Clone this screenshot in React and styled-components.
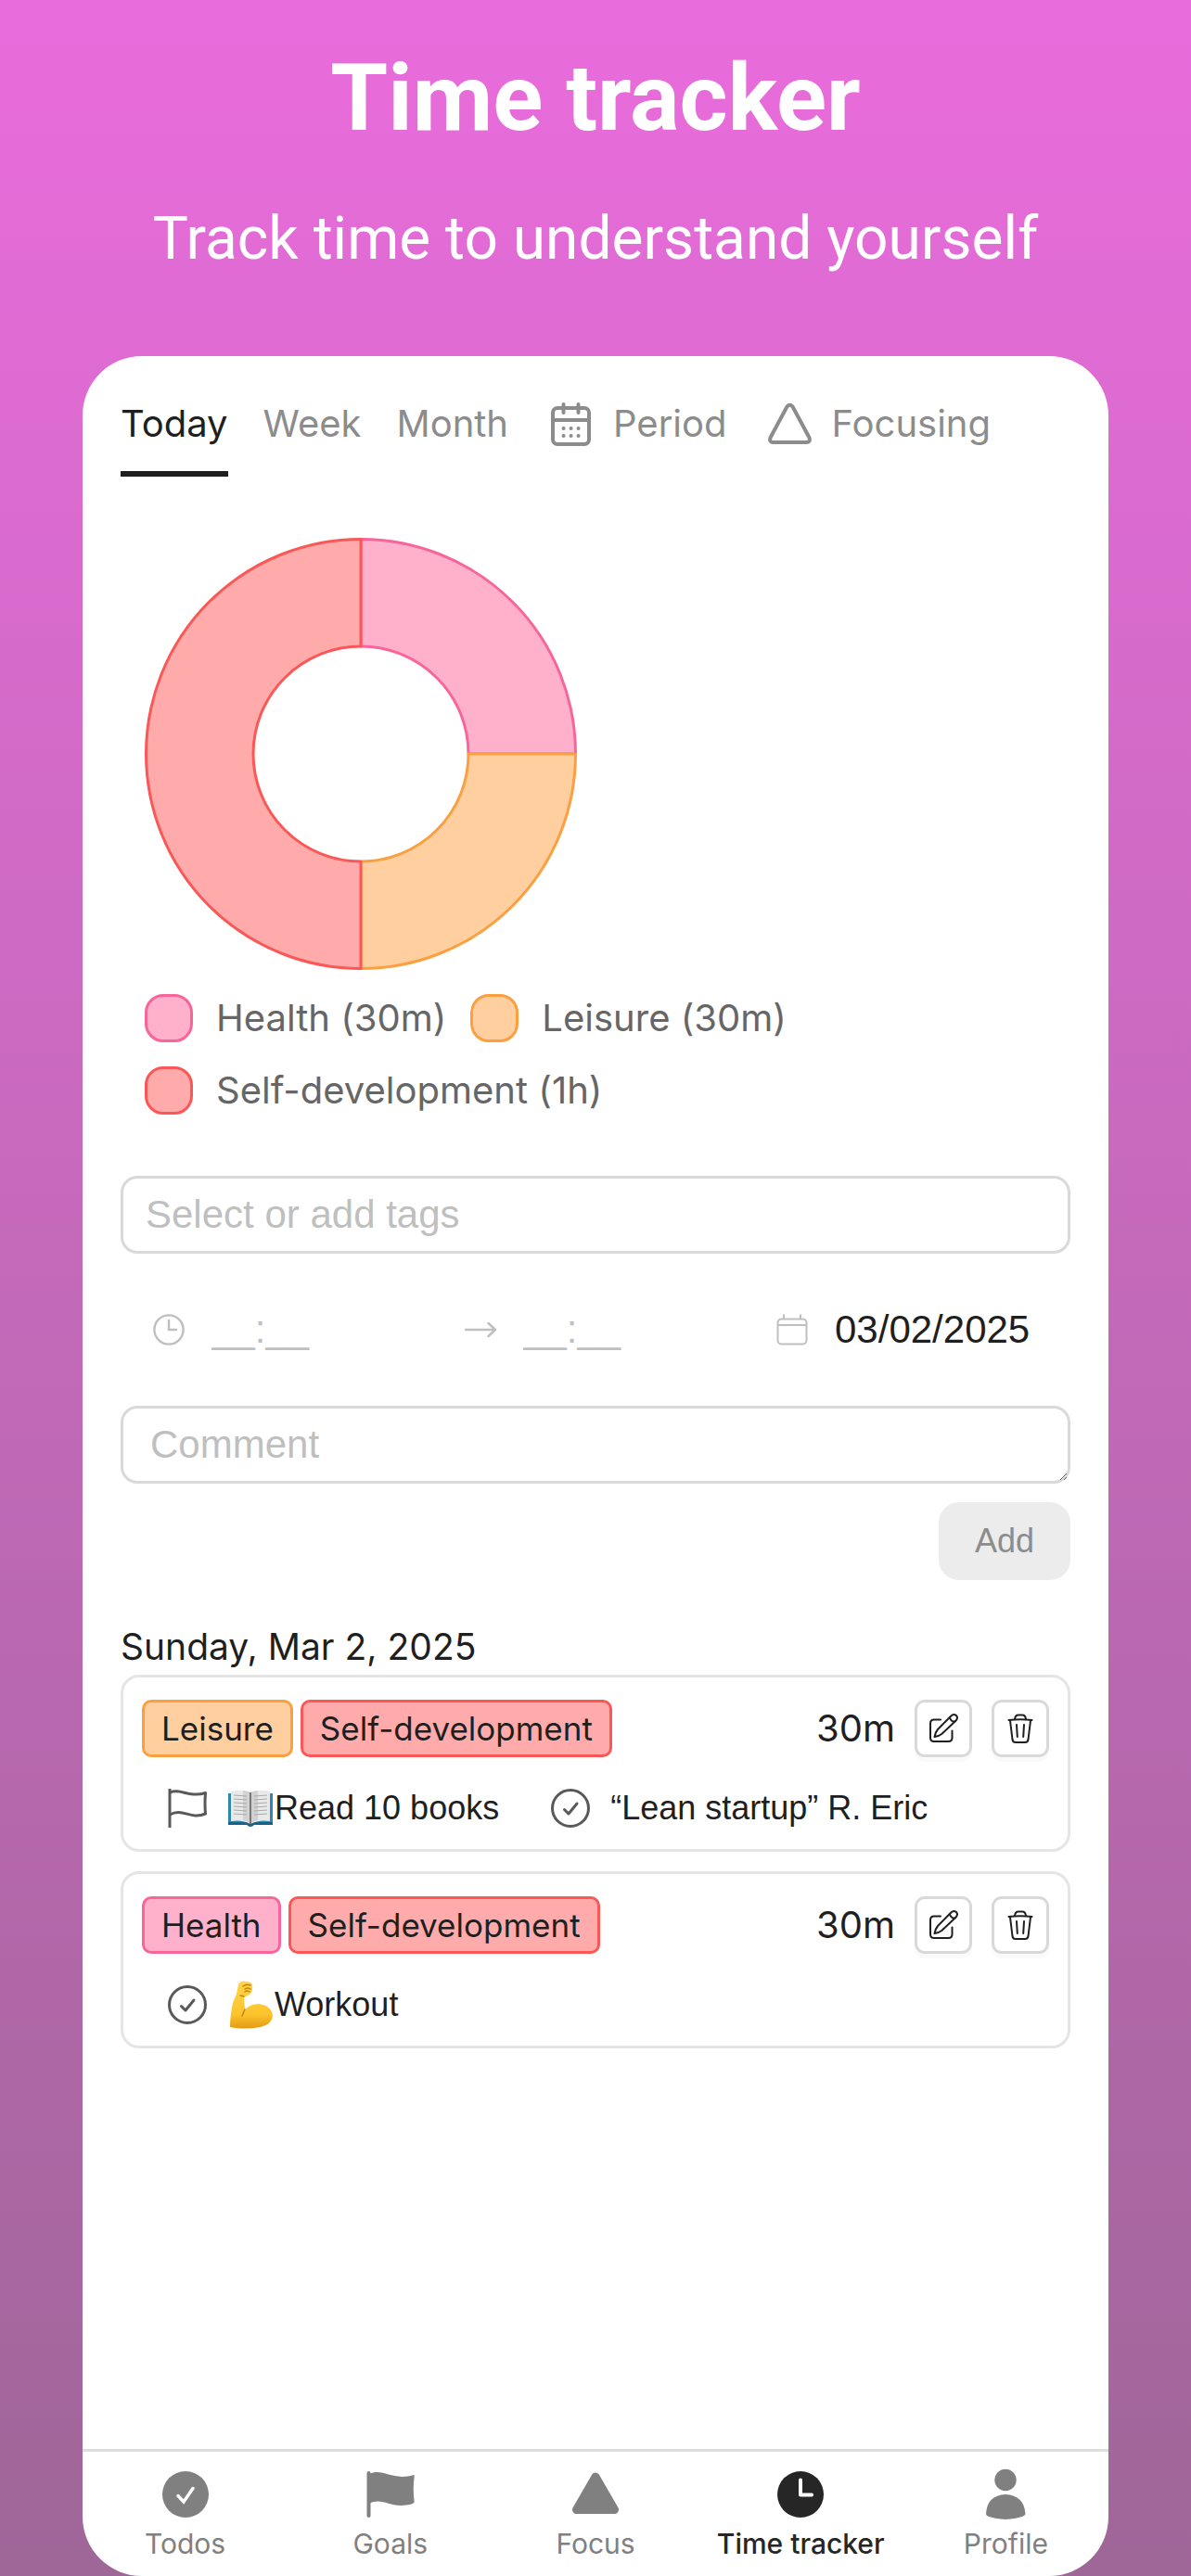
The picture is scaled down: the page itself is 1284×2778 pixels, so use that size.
import { useState } from "react";
import styled, { createGlobalStyle } from "styled-components";

const GlobalStyle = createGlobalStyle`
  *,
  *::before,
  *::after {
    box-sizing: border-box;
  }
  body {
    margin: 0;
    color: #1f1f1f;
    font-family: Inter, "Liberation Sans", sans-serif;
  }
  button,
  input,
  textarea {
    font-family: "Liberation Sans", Arial, sans-serif;
    color: inherit;
  }
`;

//Styling
const Page = styled.div`
  min-height: 100vh;
  display: flex;
  flex-direction: column;
  padding: 0 89px;
  background: linear-gradient(#e96cdc, #9f6698);
`;

const Header = styled.header`
  padding: 46px 0 88px;
  display: flex;
  flex-direction: column;
  gap: 54px;
  text-align: center;
  white-space: nowrap;
  color: #fff;
  font-family: Roboto, sans-serif;
`;

const Title = styled.h1`
  margin: 0;
  font-size: 100px;
  line-height: 120px;
  font-weight: 700;
`;

const Subtitle = styled.p`
  margin: 0;
  font-size: 64px;
  line-height: 76px;
`;

const Screen = styled.div`
  flex: 1;
  display: flex;
  flex-direction: column;
  background: #fff;
  border-radius: 64px;
  overflow: hidden;
`;

const Content = styled.main`
  flex: 1;
  padding: 0 41px;
`;

const Tabs = styled.div`
  display: flex;
  gap: 38px;
`;

const TabItem = styled.div`
  border-bottom: 6px solid
    ${(props) => (props.$active ? "#1f1f1f" : "transparent")};
  border-radius: 4px 4px 0 0;
`;

const Tab = styled.button`
  display: flex;
  align-items: center;
  gap: 21px;
  padding: 40px 0 18px;
  border: none;
  background: none;
  font-family: Inter, sans-serif;
  font-size: 40px;
  line-height: 66px;
  color: ${(props) => (props.$active ? "#1f1f1f" : "#8c8c8c")};

  svg {
    margin-left: 6px;
  }
`;

const ChartSection = styled.section`
  padding: 66px 26px 0;
`;

const Donut = styled.svg`
  display: block;
  width: 466px;
  height: 466px;
`;

const Legend = styled.ul`
  margin: 26px 0 0;
  padding: 0;
  list-style: none;
  display: flex;
  flex-wrap: wrap;
  gap: 26px;
  color: #666;
  font-size: 40px;
  line-height: 52px;
`;

const LegendItem = styled.li`
  display: flex;
  gap: 25px;
`;

const Swatch = styled.span`
  width: 52px;
  height: 52px;
  border: 3px solid ${(props) => props.$line};
  border-radius: 20px;
  background: ${(props) => props.$fill};
`;

const Form = styled.form`
  margin-top: 66px;
`;

const TagInput = styled.input`
  display: block;
  width: 100%;
  height: 84px;
  padding: 6px 24px;
  border: 3px solid #d9d9d9;
  border-radius: 18px;
  font-size: 42px;
  line-height: 66px;

  &::placeholder {
    color: #bfbfbf;
  }
`;

const TimeRow = styled.div`
  display: grid;
  grid-template-columns: repeat(3, 1fr);
  padding: 49px 16px 49px 0;
`;

const TimeField = styled.label`
  display: flex;
  align-items: center;
  gap: 29px;
  padding-left: 35px;
  color: #bfbfbf;

  svg {
    flex: none;
  }
`;

const TimeInput = styled.input`
  width: 100%;
  min-width: 0;
  height: 66px;
  padding: 0;
  border: none;
  background: none;
  font-size: 42px;
  line-height: 66px;
  color: #1f1f1f;

  &::placeholder {
    color: #bfbfbf;
  }
`;

const Comment = styled.textarea`
  display: block;
  width: 100%;
  height: 84px;
  padding: 6px 29px;
  border: 3px solid #d9d9d9;
  border-radius: 18px;
  font-size: 42px;
  line-height: 66px;
  resize: vertical;

  &::placeholder {
    color: #bfbfbf;
  }
`;

const AddButton = styled.button`
  display: block;
  margin: 20px 0 0 auto;
  width: 142px;
  height: 84px;
  border: none;
  border-radius: 22px;
  background: #ececec;
  color: #8c8c8c;
  font-size: 36px;
`;

const DayTitle = styled.h2`
  margin: 42px 0 0;
  font-size: 39px;
  line-height: 60px;
  font-weight: 400;
`;

const Entries = styled.div`
  display: flex;
  flex-direction: column;
  gap: 21px;
`;

const Entry = styled.article`
  display: flex;
  flex-direction: column;
  gap: 28px;
  padding: 24px 20px 17px;
  border: 3px solid #e5e5e5;
  border-radius: 20px;
`;

const EntryTop = styled.div`
  display: flex;
  align-items: center;
  gap: 8px;
`;

const Tag = styled.span`
  padding: 0 18px;
  border: 3px solid ${(props) => props.$line};
  border-radius: 10px;
  background: ${(props) => props.$fill};
  font-size: 35px;
  line-height: 56px;
`;

const Actions = styled.div`
  margin-left: auto;
  display: flex;
  align-items: center;
  gap: 21px;
`;

const Duration = styled.span`
  font-size: 40px;
  line-height: 56px;
`;

const IconButton = styled.button`
  display: grid;
  place-items: center;
  width: 62px;
  height: 62px;
  padding: 0;
  border: 3px solid #d9d9d9;
  border-radius: 11px;
  background: #fff;
  box-shadow: 0 5px 0 rgba(0, 0, 0, 0.02);
`;

const EntryLinks = styled.div`
  display: flex;
  gap: 56px;
  padding-left: 28px;
`;

const EntryLink = styled.div`
  display: flex;
  align-items: center;
  gap: 22px;
  font-family: "Liberation Sans", Arial, sans-serif;
  font-size: 36px;
  line-height: 54px;
`;

const LinkText = styled.span`
  display: flex;
  align-items: center;
  gap: 1px;
`;

const Nav = styled.nav`
  display: grid;
  grid-template-columns: repeat(5, 1fr);
  border-top: 3px solid #ddd;
`;

const NavLink = styled.a`
  display: flex;
  flex-direction: column;
  align-items: center;
  gap: 3px;
  padding: 18px 0 13px;
  white-space: nowrap;
  text-decoration: none;
  font-size: 30px;
  line-height: 44px;
  font-weight: ${(props) => (props.$active ? 500 : 400)};
  color: ${(props) => (props.$active ? "#262626" : "#808080")};
`;

const TAGS = {
  Health: { fill: "#ffb0ca", line: "#f8659b" },
  Leisure: { fill: "#ffcfa0", line: "#fb9f40" },
  "Self-development": { fill: "#ffabab", line: "#fb5757" },
};

const SLICES = [
  { tag: "Health", minutes: 30, label: "30m" },
  { tag: "Leisure", minutes: 30, label: "30m" },
  { tag: "Self-development", minutes: 60, label: "1h" },
];

//Icons
function CalendarDots() {
  return (
    <svg width="48" height="48" viewBox="0 0 48 48" fill="none" stroke="currentColor" strokeWidth="4" strokeLinecap="round">
      <rect x="4" y="7" width="39" height="39" rx="5" />
      <path d="M4 20H43M15.500 3V12M31.500 3V12" />
      <path d="M15.500 29h.1M23.500 29h.1M31.500 29h.1M15.500 37h.1M23.500 37h.1M31.500 37h.1" />
    </svg>
  );
}

function TriangleOutline() {
  return (
    <svg width="48" height="48" viewBox="0 0 48 48" fill="none" stroke="currentColor" strokeWidth="4" strokeLinejoin="round">
      <path d="M20.500 5.500Q23.500 2 26.500 5.500L44.500 39Q46 44 41.500 44H5.500Q1 44 2.500 39Z" />
    </svg>
  );
}

function ClockOutline() {
  return (
    <svg width="34" height="34" viewBox="0 0 34 34" fill="none" stroke="currentColor" strokeWidth="2.400" strokeLinecap="round">
      <circle cx="17" cy="17" r="15.600" />
      <path d="M17 7V17H25" />
    </svg>
  );
}

function Arrow() {
  return (
    <svg width="34" height="34" viewBox="0 0 34 34" fill="none" stroke="currentColor" strokeWidth="2.400" strokeLinecap="round" strokeLinejoin="round">
      <path d="M1 17H33M25.500 10L33 17L25.500 24" />
    </svg>
  );
}

function CalendarOutline() {
  return (
    <svg width="34" height="34" viewBox="0 0 34 34" fill="none" stroke="currentColor" strokeWidth="2">
      <rect x="1.500" y="5.500" width="31" height="27" rx="4" />
      <path d="M2 12H32M8 0.500V5M26 0.500V5" />
    </svg>
  );
}

function EditIcon() {
  return (
    <svg width="32" height="32" viewBox="0 0 32 32" fill="none" stroke="currentColor" strokeWidth="2" strokeLinecap="round" strokeLinejoin="round">
      <path d="M13 6.500H6Q2 6.500 2 10.500V26Q2 30 6 30H21.500Q25.500 30 25.500 26V18.500" />
      <path d="M23.800 3Q26.500 -0.200 29.700 1.800Q32.200 4.300 29.800 7.300L14.500 21.800Q11.500 24.300 6.500 25Q7.500 20 10 17Z" />
      <path d="M23 4.500Q24.500 9 28.500 8.500" />
    </svg>
  );
}

function TrashIcon() {
  return (
    <svg width="32" height="32" viewBox="0 0 32 32" fill="none" stroke="currentColor" strokeWidth="2" strokeLinecap="round" strokeLinejoin="round">
      <path d="M3.500 7Q16 5.500 28.500 7" />
      <path d="M10 6Q10.500 1.500 14 1.500H18Q21.500 1.500 22 6" />
      <path d="M5 7.500L7.500 28Q8 31 11 31H21Q24 31 24.500 28L27 7.500" />
      <path d="M12 12L12.800 25M20 12L19.200 25" />
    </svg>
  );
}

function FlagOutline() {
  return (
    <svg width="42" height="42" viewBox="0 0 42 42" fill="none" stroke="#595959" strokeWidth="3" strokeLinejoin="round">
      <path d="M2 0V42" />
      <path d="M2 4C14 -1 22 10 40.500 4.500Q39.500 16 40.500 27C24 34 16 20 2 28" />
    </svg>
  );
}

function CheckOutline() {
  return (
    <svg width="42" height="42" viewBox="0 0 42 42" fill="none" stroke="#595959" strokeWidth="3" strokeLinecap="round" strokeLinejoin="round">
      <circle cx="21" cy="21" r="19.500" />
      <path d="M14.500 22.500L19 27L28 16" />
    </svg>
  );
}

function BookEmoji() {
  return (
    <svg width="50" height="40" viewBox="0 0 50 40" role="img" aria-label="Open book">
      <path d="M1 4H49V37H29Q25 42 21 37H1Z" fill="#2f87ae" />
      <path d="M1 35H49V38H29Q25 42 21 38H1Z" fill="#1d6285" />
      <path d="M4 2Q15 -1 25 3Q35 -1 46 2V34Q34 32 25 37Q16 32 4 34Z" fill="#e9e9e9" />
      <path d="M25 3Q29 1 33 1V33Q28 34 25 37Q22 34 17 33V1Q21 1 25 3Z" fill="#d2d2d2" />
      <path d="M25 3V37" stroke="#777" strokeWidth="2" />
      <path
        d="M7 6L21 7M7 10L21 11M7 14L21 15M7 18L21 19M7 22L21 23M7 26L21 27M43 6L29 7M43 10L29 11M43 14L29 15M43 18L29 19M43 22L29 23M43 26L29 27"
        stroke="#a9a9a9"
        strokeWidth="1"
      />
    </svg>
  );
}

function MuscleEmoji() {
  return (
    <svg width="50" height="52" viewBox="0 0 50 52" role="img" aria-label="Flexed arm">
      <defs>
        <linearGradient id="skin" x1="0" y1="0" x2="0" y2="1">
          <stop offset="0" stopColor="#ffd54a" />
          <stop offset="0.700" stopColor="#fcc42c" />
          <stop offset="1" stopColor="#e39a15" />
        </linearGradient>
      </defs>
      <path
        d="M12 4Q15 -1 20 1Q25 1 27 4Q28 11 25 14Q21 18 18 17L19 31Q25 25 34 25Q48 27 49 38Q48 47 36 50Q18 53 3 50Q3 38 6 24L10 14Z"
        fill="url(#skin)"
      />
      <path d="M17 6Q21 3 25 5M19 9Q22 7 25 9M19 12Q21 10 24 12M18 17L14 16M19 31L16 38" fill="none" stroke="#c9820f" strokeWidth="1.500" strokeLinecap="round" />
    </svg>
  );
}

const NAV_ICONS = {
  Todos: (
    <>
      <circle cx="28" cy="28" r="25" fill="currentColor" />
      <path d="M20 29.500L26 36L36 21.500" fill="none" stroke="#fff" strokeWidth="3.500" strokeLinecap="round" />
    </>
  ),
  Goals: (
    <>
      <path d="M4.500 5V51" stroke="currentColor" strokeWidth="4" strokeLinecap="round" />
      <path d="M5 6C20 -1 30 14 53 7Q54 7 53.500 10Q52 22 53.500 35Q54 37 52 38C28 45 20 30 5 38Z" fill="currentColor" />
    </>
  ),
  Focus: (
    <path d="M28 9L7.500 44.500H48.500Z" fill="currentColor" stroke="currentColor" strokeWidth="9" strokeLinejoin="round" />
  ),
  "Time tracker": (
    <>
      <circle cx="28" cy="28" r="25" fill="currentColor" />
      <path d="M28 12.500V28.500H40" fill="none" stroke="#fff" strokeWidth="4" strokeLinecap="round" strokeLinejoin="round" />
    </>
  ),
  Profile: (
    <>
      <circle cx="28" cy="12.500" r="11.700" fill="currentColor" />
      <path d="M7 49Q8 29 28 28Q48 29 49.500 49Q49 51 46 52Q28 58 10 52Q7 51 7 49Z" fill="currentColor" />
    </>
  ),
};

function slicePath(start, end) {
  const c = 233;
  const point = (r, t) => {
    const a = t * 2 * Math.PI - Math.PI / 2;
    return `${c + r * Math.cos(a)} ${c + r * Math.sin(a)}`;
  };
  const outer = 231.5;
  const inner = 116;
  const large = end - start > 0.5 ? 1 : 0;
  return `M${point(outer, start)}A${outer} ${outer} 0 ${large} 1 ${point(outer, end)}L${point(inner, end)}A${inner} ${inner} 0 ${large} 0 ${point(inner, start)}Z`;
}

function TimeChart() {
  const total = SLICES.reduce((sum, s) => sum + s.minutes, 0);
  let passed = 0;
  return (
    <ChartSection>
      <Donut viewBox="0 0 466 466" role="img" aria-label="Time by tag">
        {SLICES.map((s) => {
          const start = passed / total;
          passed += s.minutes;
          return (
            <path
              key={s.tag}
              d={slicePath(start, passed / total)}
              fill={TAGS[s.tag].fill}
              stroke={TAGS[s.tag].line}
              strokeWidth="3"
              strokeLinejoin="round"
            />
          );
        })}
      </Donut>
      <Legend>
        {SLICES.map((s) => (
          <LegendItem key={s.tag}>
            <Swatch $fill={TAGS[s.tag].fill} $line={TAGS[s.tag].line} />
            {s.tag} ({s.label})
          </LegendItem>
        ))}
      </Legend>
    </ChartSection>
  );
}

function TimeEntry({ tags, duration, children }) {
  return (
    <Entry>
      <EntryTop>
        {tags.map((tag) => (
          <Tag key={tag} $fill={TAGS[tag].fill} $line={TAGS[tag].line}>
            {tag}
          </Tag>
        ))}
        <Actions>
          <Duration>{duration}</Duration>
          <IconButton type="button" aria-label="Edit">
            <EditIcon />
          </IconButton>
          <IconButton type="button" aria-label="Delete">
            <TrashIcon />
          </IconButton>
        </Actions>
      </EntryTop>
      <EntryLinks>{children}</EntryLinks>
    </Entry>
  );
}

const tabs = [
  { name: "Today" },
  { name: "Week" },
  { name: "Month" },
  { name: "Period", icon: <CalendarDots /> },
  { name: "Focusing", icon: <TriangleOutline /> },
];

function App() {
  const [tab, setTab] = useState("Today");
  const [date, setDate] = useState("03/02/2025");

  return (
    <>
      <GlobalStyle />
      <Page>
        <Header>
          <Title>Time tracker</Title>
          <Subtitle>Track time to understand yourself</Subtitle>
        </Header>
        <Screen>
          <Content>
            <Tabs role="tablist">
              {tabs.map(({ name, icon }) => (
                <TabItem key={name} $active={tab === name} role="presentation">
                  <Tab
                    type="button"
                    role="tab"
                    aria-selected={tab === name}
                    $active={tab === name}
                    onClick={() => setTab(name)}
                  >
                    {icon}
                    {name}
                  </Tab>
                </TabItem>
              ))}
            </Tabs>
            <TimeChart />
            <Form onSubmit={(e) => e.preventDefault()}>
              <TagInput aria-label="Tags" placeholder="Select or add tags" />
              <TimeRow>
                <TimeField>
                  <ClockOutline />
                  <TimeInput aria-label="Start time" placeholder="__:__" />
                </TimeField>
                <TimeField>
                  <Arrow />
                  <TimeInput aria-label="End time" placeholder="__:__" />
                </TimeField>
                <TimeField>
                  <CalendarOutline />
                  <TimeInput
                    aria-label="Date"
                    value={date}
                    onChange={(e) => setDate(e.target.value)}
                  />
                </TimeField>
              </TimeRow>
              <Comment aria-label="Comment" placeholder="Comment" rows={1} />
              <AddButton type="submit" disabled>
                Add
              </AddButton>
            </Form>
            <DayTitle>Sunday, Mar 2, 2025</DayTitle>
            <Entries>
              <TimeEntry tags={["Leisure", "Self-development"]} duration="30m">
                <EntryLink>
                  <FlagOutline />
                  <LinkText>
                    <BookEmoji />
                    Read 10 books
                  </LinkText>
                </EntryLink>
                <EntryLink>
                  <CheckOutline />
                  <LinkText>“Lean startup” R. Eric</LinkText>
                </EntryLink>
              </TimeEntry>
              <TimeEntry tags={["Health", "Self-development"]} duration="30m">
                <EntryLink>
                  <CheckOutline />
                  <LinkText>
                    <MuscleEmoji />
                    Workout
                  </LinkText>
                </EntryLink>
              </TimeEntry>
            </Entries>
          </Content>
          <Nav>
            {Object.keys(NAV_ICONS).map((name) => (
              <NavLink key={name} href="#" $active={name === "Time tracker"}>
                <svg width="56" height="56" viewBox="0 0 56 56" aria-hidden="true">
                  {NAV_ICONS[name]}
                </svg>
                {name}
              </NavLink>
            ))}
          </Nav>
        </Screen>
      </Page>
    </>
  );
}

export default App;
